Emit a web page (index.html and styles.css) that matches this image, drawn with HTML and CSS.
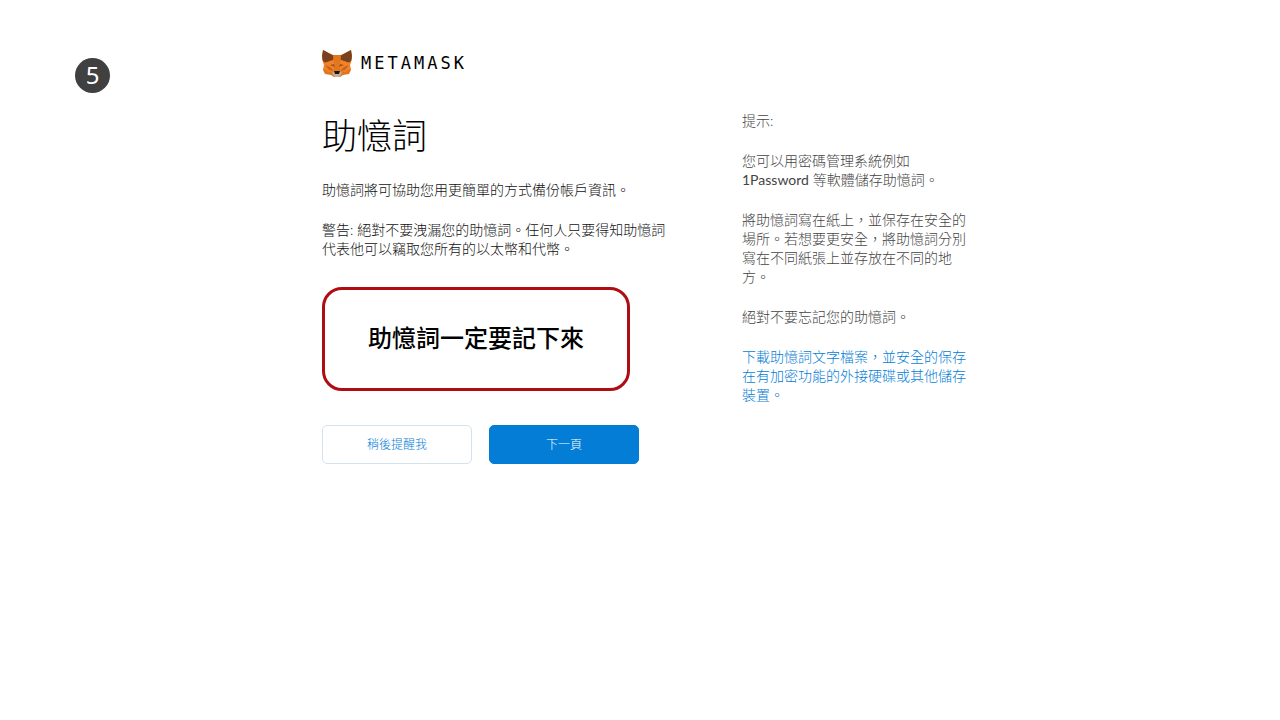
FILE: index.html
```
<!DOCTYPE html>
<html lang="zh-Hant">
	<head>
		<meta charset="UTF-8" />
		<meta name="viewport" content="width=device-width, initial-scale=1.0" />
		<title>MetaMask 助憶詞</title>
		<link rel="stylesheet" href="styles.css">
	</head>
	<body>
		<div class="page">
			<div class="step">5</div>
			<div class="container">
				<header class="brand">
					<svg class="fox" viewBox="0 0 30 27" aria-hidden="true">
						<path fill="#e2761b" d="M1 0 11 5h8L29 0l1 9-2 6 1 5-2 4-6 1-3 2h-6l-3-2-6-1-2-4 1-5-2-6z" />
						<path fill="#7a4120" d="M1 0 12 6l-1 4-7 3-3-2L0 6zM29 0 18 6l1 4 7 3 3-2 1-5z" />
						<path fill="#f0832a" d="M2 13 11 10l2 5-1 6-5 1-5-3zM28 13 19 10l-2 5 1 6 5 1 5-3z" />
						<path fill="#e4761b" d="M11 6h8l-2 9 1 6h-6l1-6z" />
						<path fill="#cd6116" d="M3 15l5 2 4 4-5-1zM27 15l-5 2-4 4 5-1z" />
						<path fill="#a1531c" d="M8 15l4-1 1 3zM22 15l-4-1-1 3z" />
						<path fill="#c0ad9e" d="M10 23l2-2h6l2 2-2 3-1 1h-4l-1-1z" />
						<path fill="#161616" d="M12 21h6l-1 3h-4z" />
					</svg>
					<span class="wordmark">METAMASK</span>
				</header>
				<div class="columns">
					<main class="main">
						<h1>助憶詞</h1>
						<p>助憶詞將可協助您用更簡單的方式備份帳戶資訊。</p>
						<p>警告: 絕對不要洩漏您的助憶詞。任何人只要得知助憶詞代表他可以竊取您所有的以太幣和代幣。</p>
						<div class="phrase">助憶詞一定要記下來</div>
						<div class="buttons">
							<button type="button" class="btn-secondary">稍後提醒我</button>
							<button type="button" class="btn-primary">下一頁</button>
						</div>
					</main>
					<aside class="tips">
						<p>提示:</p>
						<p>您可以用密碼管理系統例如 <span class="latin">1Password</span> 等軟體儲存助憶詞。</p>
						<p>將助憶詞寫在紙上，並保存在安全的場所。若想要更安全，將助憶詞分別寫在不同紙張上並存放在不同的地方。</p>
						<p>絕對不要忘記您的助憶詞。</p>
						<p><a href="#">下載助憶詞文字檔案，並安全的保存在有加密功能的外接硬碟或其他儲存裝置。</a></p>
					</aside>
				</div>
			</div>
		</div>
	</body>
</html>
```
FILE: styles.css
```
* {
	box-sizing: border-box;
}
body {
	margin: 0;
	background-color: #fff;
	color: #111;
	font-family: Lato, "Noto Sans CJK TC", sans-serif;
	font-size: 14px;
	font-weight: 300;
	line-height: 19px;
}
h1 {
	margin: 0 0 21px;
	color: #000;
	font-size: 35px;
	font-weight: 300;
	line-height: 48px;
}
p {
	margin: 0 0 21px;
}
button {
	width: 150px;
	height: 39px;
	padding: 0 6px 2px;
	border: 1px solid #d2e3ef;
	border-radius: 5px;
	font-family: inherit;
	font-size: 12px;
	font-weight: 300;
	cursor: pointer;
}
.page {
	display: flex;
	gap: 212px;
	padding: 48px 75px;
}
.step {
	flex: none;
	width: 35px;
	height: 35px;
	margin-top: 10px;
	border-radius: 50%;
	background-color: #404040;
	color: #fff;
	font-family: "Noto Sans", sans-serif;
	font-size: 24px;
	font-weight: 400;
	line-height: 33px;
	text-align: center;
}
.container {
	flex: 1;
}
.brand {
	display: flex;
	align-items: center;
	gap: 9px;
	height: 30px;
}
.fox {
	width: 30px;
	height: 27px;
}
.wordmark {
	color: #000;
	font-family: "DejaVu Sans Mono", monospace;
	font-size: 17px;
	font-weight: 400;
	line-height: 20px;
	letter-spacing: 3px;
}
.columns {
	display: flex;
	gap: 70px;
	margin-top: 33px;
}
.main {
	width: 350px;
}
.latin {
	font-weight: 400;
}
.phrase {
	width: 308px;
	margin-top: 29px;
	padding: 31px 0 33px;
	border: 3px solid #b00c14;
	border-radius: 20px;
	color: #000;
	font-size: 24px;
	font-weight: 500;
	line-height: 34px;
	text-align: center;
}
.buttons {
	display: flex;
	gap: 17px;
	margin-top: 34px;
}
.btn-secondary {
	background-color: #fff;
	color: #037dd6;
}
.btn-primary {
	border-color: #037dd6;
	background-color: #037dd6;
	color: #fff;
}
.tips {
	width: 228px;
	color: #444;
}
.tips a {
	color: #037dd6;
	text-decoration: none;
}
```
